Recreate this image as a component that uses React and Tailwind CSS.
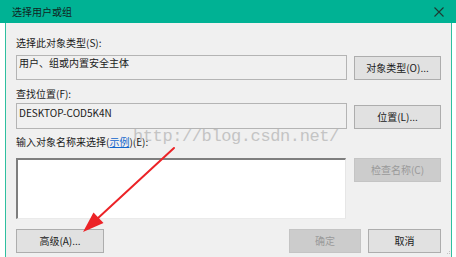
import React from "react";

const font = { fontFamily: '"Noto Sans CJK SC", "Noto Sans", sans-serif' };

function Btn({ children, className = "", disabled = false }) {
  return (
    <div
      className={
        "flex items-center justify-center h-[24px] text-[10px] leading-[14px] border " +
        (disabled
          ? "bg-[#cccccc] border-[#c4c4c4] text-[#9a9a9a] "
          : "bg-[#e1e1e1] border-[#adadad] text-[#1a1a1a] ") +
        className
      }
    >
      {children}
    </div>
  );
}

export default function App() {
  return (
    <div
      className="relative w-[456px] h-[257px] bg-white overflow-hidden flex flex-col"
      style={font}
    >
      {/* title bar */}
      <div className="h-[23px] bg-[#00b294] flex items-center justify-between pl-[12px] pr-[12px] shrink-0">
        <span className="text-[10px] leading-[14px] text-[#10251f]">选择用户或组</span>
        <svg width="10" height="10" viewBox="0 0 10 10" className="mt-[1px]">
          <path d="M0.5 0.5 L9.5 9.5 M9.5 0.5 L0.5 9.5" stroke="#1d3a33" strokeWidth="1.1" />
        </svg>
      </div>

      {/* body */}
      <div className="flex-1 flex pl-[5px] pr-[4px]">
        <div className="flex-1 flex flex-col bg-[#f0f0f0] border-x border-[#2fbf9f] px-[10px] text-[#1a1a1a]">
          <div className="mt-[12px] h-[16px] text-[10px] leading-[16px]">选择此对象类型(S):</div>
          <div className="mt-[4px] flex gap-[7px] items-start">
            <div className="flex-1 h-[25px] border border-[#b4b4b4] bg-[#f0f0f0] pl-[2px] text-[10px] leading-[14px]">
              用户、组或内置安全主体
            </div>
            <Btn className="w-[87px] mt-[1px]">对象类型(O)...</Btn>
          </div>

          <div className="mt-[6px] h-[16px] text-[10px] leading-[16px]">查找位置(F):</div>
          <div className="mt-[1px] flex gap-[7px] items-start">
            <div className="flex-1 h-[26px] border border-[#b4b4b4] bg-[#f0f0f0] pl-[2px] pt-[2px] text-[10px] leading-[14px]">
              DESKTOP-COD5K4N
            </div>
            <Btn className="w-[87px] mt-[2px] h-[23px]">位置(L)...</Btn>
          </div>

          <div className="mt-[5px] h-[16px] text-[10px] leading-[16px]">
            输入对象名称来选择(<span className="text-[#1166cc] underline">示例</span>)(E):
          </div>
          <div className="mt-[8px] flex gap-[8px] items-start">
            <div className="flex-1 h-[61px] bg-white border-t-2 border-l-2 border-r border-b border-t-[#7e7e7e] border-l-[#7e7e7e] border-r-[#e6e6e6] border-b-[#eaeaea]" />
            <Btn disabled className="w-[87px]">检查名称(C)</Btn>
          </div>

          <div className="mt-[10px] flex items-start">
            <Btn className="w-[88px]">高级(A)...</Btn>
            <div className="flex-1" />
            <Btn disabled className="w-[72px]">确定</Btn>
            <Btn className="w-[73px] ml-[7px]">取消</Btn>
          </div>
        </div>
      </div>

      {/* watermark */}
      <div
        className="absolute left-[133px] top-[127px] text-[17px] leading-[20px] tracking-[-0.4px] text-[#c4c4c4] pointer-events-none"
        style={{ fontFamily: '"Liberation Mono", monospace' }}
      >
        http://blog.csdn.net/
      </div>

      {/* red arrow */}
      <svg className="absolute inset-0 pointer-events-none" width="456" height="257" viewBox="0 0 456 257">
        <path d="M174 148 L97 219" stroke="#ec2327" strokeWidth="2" strokeLinecap="round" />
        <path d="M83 232 L93.5 212.5 L103.5 223 Z" fill="#ec2327" />
        <g fill="#c2c2c2">
          <rect x="449" y="251" width="1" height="1" />
          <rect x="447" y="253" width="1" height="1" />
          <rect x="449" y="253" width="1" height="1" />
        </g>
      </svg>
    </div>
  );
}
